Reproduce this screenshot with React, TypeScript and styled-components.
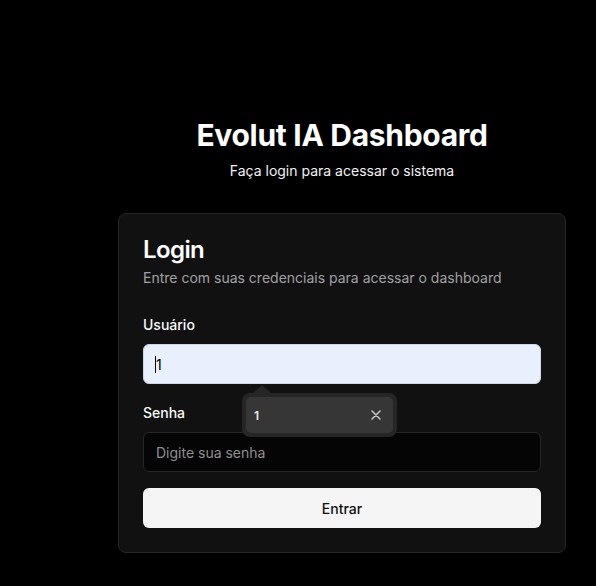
import React from "react";
import styled, { createGlobalStyle } from "styled-components";

const Global = createGlobalStyle`
  html, body { margin: 0; padding: 0; background: #000; }
  body { font-family: Inter, "Noto Sans", sans-serif; color: #fafafa; -webkit-font-smoothing: antialiased; }
  * { box-sizing: border-box; }
`;

const Page = styled.div`
  min-height: 586px;
  padding: 117px 0 0 118px;
`;

const Column = styled.div`
  width: 448px;
  display: flex;
  flex-direction: column;
`;

const Hero = styled.div`
  text-align: center;
  margin-bottom: 32px;
`;

const Title = styled.h1`
  margin: 0 0 8px;
  font-size: 30px;
  line-height: 36px;
  font-weight: 700;
  letter-spacing: -0.3px;
  color: #fff;
`;

const Subtitle = styled.p`
  margin: 0;
  font-size: 14px;
  line-height: 20px;
  color: #f2f2f2;
`;

const Card = styled.div`
  background: #111111;
  border: 1px solid #262626;
  border-radius: 8px;
`;

const CardHeader = styled.div`
  padding: 24px;
  display: flex;
  flex-direction: column;
  gap: 6px;
`;

const CardTitle = styled.h2`
  margin: 0;
  font-size: 24px;
  line-height: 24px;
  font-weight: 600;
  letter-spacing: -0.6px;
  color: #fff;
`;

const CardDescription = styled.p`
  margin: 0;
  font-size: 14px;
  line-height: 20px;
  color: #a1a1a1;
`;

const Form = styled.form`
  padding: 0 24px 24px;
  display: flex;
  flex-direction: column;
  gap: 16px;
`;

const Field = styled.div`
  display: flex;
  flex-direction: column;
  gap: 8px;
  position: relative;
`;

const Label = styled.label`
  padding-top: 2px;
  font-size: 14px;
  line-height: 22px;
  font-weight: 500;
  color: #fafafa;
`;

const InputWrap = styled.div`
  position: relative;
`;

const Input = styled.input<{ $autofilled?: boolean }>`
  width: 100%;
  height: 40px;
  padding: 0 12px;
  border-radius: 6px;
  border: 1px solid ${(p) => (p.$autofilled ? "#cfd6e4" : "#262626")};
  background: ${(p) => (p.$autofilled ? "#e8f0fe" : "#050505")};
  color: ${(p) => (p.$autofilled ? "#000" : "#fafafa")};
  font-family: Inter, "Noto Sans", sans-serif;
  font-size: 14px;
  outline: none;
  &::placeholder { color: #8f8f8f; }
`;

const Caret = styled.span`
  position: absolute;
  left: 12px;
  top: 12px;
  width: 1px;
  height: 17px;
  background: #000;
`;

const Button = styled.button`
  height: 40px;
  border: none;
  border-radius: 6px;
  background: #f5f5f5;
  color: #111;
  font-family: Inter, "Noto Sans", sans-serif;
  font-size: 14px;
  font-weight: 500;
  cursor: pointer;
`;

const Suggest = styled.div`
  position: absolute;
  left: 99px;
  top: 49px;
  width: 155px;
  height: 44px;
  padding: 4px;
  background: #262626;
  border-radius: 8px;
  z-index: 2;
  &::before {
    content: "";
    position: absolute;
    left: 11px;
    top: -8px;
    border-left: 9px solid transparent;
    border-right: 9px solid transparent;
    border-bottom: 8px solid #262626;
  }
`;

const SuggestInner = styled.div`
  height: 36px;
  background: #363636;
  border-radius: 5px;
  display: flex;
  align-items: center;
  justify-content: space-between;
  padding: 0 12px 0 8px;
  font-size: 12px;
  font-weight: 600;
  color: #e8e8e8;
`;

export default function App() {
  return (
    <>
      <Global />
      <Page>
        <Column>
          <Hero>
            <Title>Evolut IA Dashboard</Title>
            <Subtitle>Faça login para acessar o sistema</Subtitle>
          </Hero>
          <Card>
            <CardHeader>
              <CardTitle>Login</CardTitle>
              <CardDescription>Entre com suas credenciais para acessar o dashboard</CardDescription>
            </CardHeader>
            <Form onSubmit={(e) => e.preventDefault()}>
              <Field>
                <Label htmlFor="user">Usuário</Label>
                <InputWrap>
                  <Input id="user" $autofilled value="1" readOnly />
                  <Caret />
                  <Suggest>
                    <SuggestInner>
                      <span>1</span>
                      <svg width="10" height="10" viewBox="0 0 10 10">
                        <path d="M1 1L9 9M9 1L1 9" stroke="#c4c4c4" strokeWidth="1.6" strokeLinecap="round" />
                      </svg>
                    </SuggestInner>
                  </Suggest>
                </InputWrap>
              </Field>
              <Field>
                <Label htmlFor="pass">Senha</Label>
                <Input id="pass" type="password" placeholder="Digite sua senha" />
              </Field>
              <Button type="submit">Entrar</Button>
            </Form>
          </Card>
        </Column>
      </Page>
    </>
  );
}
